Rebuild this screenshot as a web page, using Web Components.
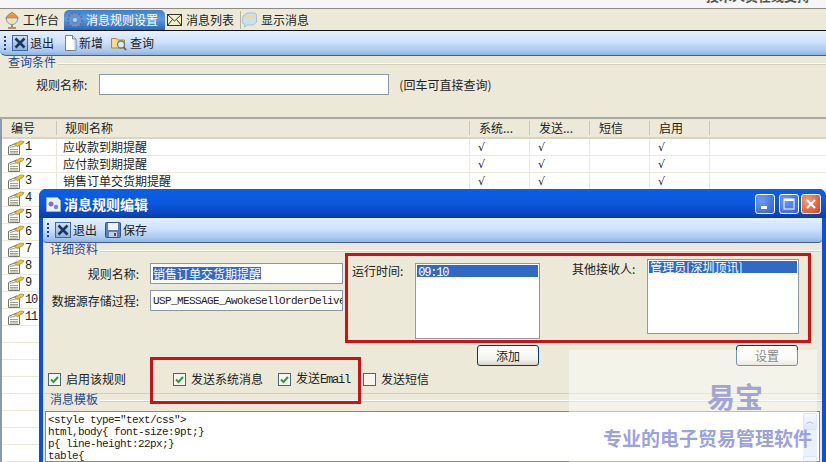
<!DOCTYPE html>
<html lang="zh">
<head>
<meta charset="utf-8">
<title>消息规则设置</title>
<style>
  html, body {
    background: #ece9d8;
    color: #222222;
    font: 12px/14px "Noto Sans CJK SC", "Liberation Sans", sans-serif;
    height: 462px;
    margin: 0;
    overflow: hidden;
    position: relative;
    width: 826px;
  }
</style>
</head>
<body>
<app-top></app-top>
<xp-tabs></xp-tabs>
<xp-toolbar>
  <xp-tool icon="exit" gap="10">退出</xp-tool>
  <xp-tool icon="page" gap="8">新增</xp-tool>
  <xp-tool icon="find">查询</xp-tool>
</xp-toolbar>
<query-panel></query-panel>
<rule-grid></rule-grid>
<rule-dialog></rule-dialog>
<note-box style="left: 345px; top: 253px; width: 466px; height: 90px;"></note-box>
<note-box style="left: 150px; top: 357px; width: 211px; height: 47px;"></note-box>
<brand-mark></brand-mark>

<script>
const ICONS = {
  exit: `<svg width="16" height="16" viewBox="0 0 16 16"><defs><linearGradient id="e" x1="0" y1="0" x2="0" y2="1"><stop offset="0" stop-color="#cfe0f4"/><stop offset="1" stop-color="#8fb0d8"/></linearGradient></defs><rect x=".5" y=".5" width="15" height="15" fill="url(#e)" stroke="#3c6aa8"/><path d="M3.5 3.5l9 9M12.5 3.5l-9 9" stroke="#17375f" stroke-width="2.6"/></svg>`,
  page: `<svg width="13" height="16" viewBox="0 0 13 16"><path d="M1.5.5h7l3.5 3.5v11.5h-10.500z" fill="#fff" stroke="#77848f"/><path d="M8.500.5v3.500h3.500" fill="#dfe6ee" stroke="#77848f"/><path d="M11 5v10" stroke="#b9c3cf"/></svg>`,
  find: `<svg width="17" height="16" viewBox="0 0 17 16"><path d="M.5 3.500h5l1 1.500h7v8h-13z" fill="#f5dc8c" stroke="#a98a3c"/><circle cx="10" cy="9.500" r="3.500" fill="#d8ecf8" stroke="#6c7c8c" stroke-width="1.300"/><path d="M12.500 12l2.500 3" stroke="#806030" stroke-width="1.800"/></svg>`,
  save: `<svg width="16" height="16" viewBox="0 0 16 16"><rect x=".5" y=".5" width="15" height="15" rx="1" fill="#5d7fc0" stroke="#33508c"/><rect x="3" y="1" width="10" height="7" fill="#eef3fa"/><rect x="4" y="10" width="8" height="5" fill="#c4cedd"/><rect x="9" y="11" width="2" height="3" fill="#33508c"/></svg>`,
  home: `<svg width="16" height="18" viewBox="0 0 16 18"><circle cx="8" cy="8" r="5.500" fill="#dce8f0" stroke="#8c9aa8"/><path d="M8 1l6.500 6h-13z" fill="#e89838" stroke="#b06a20" stroke-width=".6"/><rect x="6" y="8" width="4" height="4" fill="#f4e0a8"/><path d="M8 13.500v2.500M4 17h8" stroke="#8c7a50" stroke-width="1.500"/></svg>`,
  gear: `<svg width="16" height="16" viewBox="0 0 16 16"><circle cx="8" cy="8" r="5.500" fill="none" stroke="#6f90c4" stroke-width="3.600"/><circle cx="8" cy="8" r="7" fill="none" stroke="#4d6fa8" stroke-width="1.500" stroke-dasharray="2 1.600"/><circle cx="8" cy="8" r="2" fill="#bcd6f2"/></svg>`,
  mail: `<svg width="15" height="12" viewBox="0 0 15 12"><rect x=".5" y=".5" width="14" height="11" fill="#f6efc8" stroke="#333"/><path d="M.5.500l7 6.500 7-6.500M.5 11.500l5-6M14.500 11.500l-5-6" fill="none" stroke="#333"/></svg>`,
  bubble: `<svg width="16" height="16" viewBox="0 0 16 16"><path d="M2 4l4-3h8l1.500 2v7l-3 3h-6l-3 2 .5-2.500-3-2z" fill="#c9dff2" stroke="#a4b4c0" stroke-width=".8"/><path d="M4 3.500h9l1 2-10 1z" fill="#f3d98c"/></svg>`,
  note: `<svg width="18" height="15" viewBox="0 0 18 15"><path d="M1.500 6.500l8-3.500 3 1.500v10h-11z" fill="#f6f6f0" stroke="#77776a"/><path d="M3 7.500l7-2M3 9.500h8M3 11.500h8M3 13h8" stroke="#8d8d80" stroke-width=".8"/><path d="M7.500 4.500l6-3.500 3.500.5-1 2-5.500 3z" fill="#e8c23c" stroke="#a08420" stroke-width=".7"/></svg>`,
  app: `<svg width="15" height="16" viewBox="0 0 15 16"><path d="M.5 1.500h11l3 3v11h-14z" fill="#e8f0fa" stroke="#9ab0cc"/><circle cx="5" cy="8" r="2.500" fill="#8a70b0"/><circle cx="10" cy="11" r="2.200" fill="#6f8ec8"/></svg>`
};

class XpIcon extends HTMLElement {
  connectedCallback() {
    this.attachShadow( {mode: 'open'} );
    this.shadowRoot.innerHTML = `
      <style>
        :host { display: inline-flex; flex: none; }
        svg { display: block; }
      </style>
      ${ICONS[this.getAttribute( 'name' )]}
    `;
  }
}
customElements.define( 'xp-icon', XpIcon );

class AppTop extends HTMLElement {
  constructor() {
    super();
    this.attachShadow( {mode: 'open'} );
    this.shadowRoot.innerHTML = `
      <style>
        :host {
          background: #f6f6f8;
          border-bottom: 1px solid #8b8b82;
          box-sizing: border-box;
          display: flex;
          height: 9px;
          justify-content: flex-end;
          overflow: hidden;
          padding: 0 16px 0 0;
        }
        span { color: #555555; font-size: 13px; font-weight: 700; line-height: 14px; margin-top: -11px; }
      </style>
      <span>技术人员在线支持</span>
    `;
  }
}
customElements.define( 'app-top', AppTop );

class XpTabs extends HTMLElement {
  constructor() {
    super();
    this.attachShadow( {mode: 'open'} );
    this.shadowRoot.innerHTML = `
      <style>
        :host {
          align-items: flex-end;
          background: #ece9d8;
          border-bottom: 1px solid #111111;
          box-sizing: border-box;
          display: flex;
          height: 22px;
          padding: 0 0 0 3px;
        }
        div {
          align-items: center;
          display: flex;
          height: 20px;
          white-space: nowrap;
        }
        .one { gap: 3px; padding: 0 5px 0 1px; }
        .on {
          background: linear-gradient( #3f80c8, #5c9ce0 45%, #2a66b4 );
          border-radius: 5px 5px 0 0;
          color: #ffffff;
          gap: 3px;
          padding: 0 6px 0 3px;
          width: 92px;
        }
        .two { gap: 4px; padding: 0 6px 0 2px; }
        .three { border-left: 1px solid #b8b4a0; gap: 4px; height: 18px; margin: 0 0 1px 0; }
      </style>
      <div class="one"><xp-icon name="home"></xp-icon>工作台</div>
      <div class="on"><xp-icon name="gear"></xp-icon>消息规则设置</div>
      <div class="two"><xp-icon name="mail"></xp-icon>消息列表</div>
      <div class="three"><xp-icon name="bubble"></xp-icon>显示消息</div>
    `;
  }
}
customElements.define( 'xp-tabs', XpTabs );

class XpToolbar extends HTMLElement {
  constructor() {
    super();
    this.attachShadow( {mode: 'open'} );
    this.shadowRoot.innerHTML = `
      <style>
        :host {
          align-items: center;
          background: linear-gradient( #e4f0ff, #cfe2fb 45%, #a6c6ee 85%, #8fb2e0 );
          border-bottom: 1px solid #3d5f9e;
          border-radius: 0 0 0 6px;
          box-sizing: border-box;
          display: flex;
          height: 25px;
          padding: 0 0 0 4px;
        }
        i {
          border-left: 2px dotted #24407a;
          height: 14px;
          margin: 0 6px 0 0;
        }
      </style>
      <i></i>
      <slot></slot>
    `;
  }
}
customElements.define( 'xp-toolbar', XpToolbar );

class XpTool extends HTMLElement {
  constructor() {
    super();
    this.attachShadow( {mode: 'open'} );
  }

  connectedCallback() {
    this.shadowRoot.innerHTML = `
      <style>
        :host {
          align-items: center;
          display: inline-flex;
          gap: 2px;
          margin-right: ${this.getAttribute( 'gap' ) || 0}px;
        }
      </style>
      <xp-icon name="${this.getAttribute( 'icon' )}"></xp-icon><slot></slot>
    `;
  }
}
customElements.define( 'xp-tool', XpTool );

class XpLegend extends HTMLElement {
  constructor() {
    super();
    this.attachShadow( {mode: 'open'} );
    this.shadowRoot.innerHTML = `
      <style>
        :host {
          align-items: center;
          color: #1c4a94;
          display: flex;
          gap: 2px;
          height: 12px;
          line-height: 12px;
        }
        i { border-bottom: 1px solid #d0d0bf; border-top: 1px solid #ffffff; flex: 1; height: 0; margin-top: 3px; }
      </style>
      <slot></slot><i></i>
    `;
  }
}
customElements.define( 'xp-legend', XpLegend );

class QueryPanel extends HTMLElement {
  constructor() {
    super();
    this.attachShadow( {mode: 'open'} );
    this.shadowRoot.innerHTML = `
      <style>
        :host {
          border-bottom: 2px solid #a9a99f;
          box-sizing: border-box;
          display: block;
          height: 63px;
          padding: 0 0 0 8px;
        }
        .row {
          align-items: center;
          display: flex;
          margin: 6px 0 0 28px;
        }
        .box {
          background: #ffffff;
          border: 1px solid #8a9aa8;
          box-sizing: border-box;
          height: 21px;
          margin: 0 10px 0 12px;
          width: 290px;
        }
      </style>
      <xp-legend>查询条件</xp-legend>
      <div class="row">
        <span>规则名称:</span><span class="box"></span><span>(回车可直接查询)</span>
      </div>
    `;
  }
}
customElements.define( 'query-panel', QueryPanel );

class RuleGrid extends HTMLElement {
  constructor() {
    super();
    this.attachShadow( {mode: 'open'} );

    const names = ['应收款到期提醒', '应付款到期提醒', '销售订单交货期提醒'];
    const columns = '55px 413px 60px 60px 60px 60px 1fr';
    let rows = '';

    for( let r = 0; r < 20; r++ ) {
      const mark = r < 3 ? '√' : '';
      const head = r < 11 ? `<xp-icon name="note"></xp-icon><span class="num">${r + 1}</span>` : '';
      rows += `
        <div class="row">
          <div class="id">${head}</div>
          <div class="name">${names[r] || ''}</div>
          <div class="flag">${mark}</div>
          <div class="flag">${mark}</div>
          <div class="flag"></div>
          <div class="flag">${mark}</div>
          <div></div>
        </div>
      `;
    }

    this.shadowRoot.innerHTML = `
      <style>
        :host {
          background: #ffffff;
          border-left: 2px solid #8a9aa8;
          box-sizing: border-box;
          display: block;
          height: 344px;
          overflow: hidden;
        }
        .head, .row {
          display: grid;
          grid-template-columns: ${columns};
        }
        .head {
          background: #ece9d8;
          border-bottom: 2px solid #d8d5c4;
          box-sizing: border-box;
          height: 20px;
        }
        .head div {
          align-items: center;
          border-right: 1px solid #cbc7b8;
          display: flex;
          margin: 2px 0 2px 0;
          padding: 0 0 0 9px;
        }
        .head div:nth-child( 2 ) { padding-left: 8px; }
        .head div:last-child { border: none; }
        .row {
          border-bottom: 1px solid #ece9d8;
          box-sizing: border-box;
          height: 17px;
        }
        .row > div {
          align-items: center;
          border-right: 1px solid #ece9d8;
          display: flex;
          padding: 0 0 0 8px;
        }
        .row > div.id { gap: 0; padding: 0 0 0 5px; }
        .row > div.name { padding: 0 0 0 6px; }
        .row > div:last-child { border: none; }
        .num { font: 12px "Liberation Mono", monospace; letter-spacing: -1.2px; }
        .flag { font: 11px "DejaVu Sans", sans-serif; }
      </style>
      <div class="head">
        <div>编号</div><div>规则名称</div><div>系统...</div><div>发送...</div><div>短信</div><div>启用</div><div></div>
      </div>
      ${rows}
    `;
  }
}
customElements.define( 'rule-grid', RuleGrid );

class XpCheck extends HTMLElement {
  constructor() {
    super();
    this.attachShadow( {mode: 'open'} );
  }

  connectedCallback() {
    const mark = this.hasAttribute( 'checked' ) ? '<path d="M3 6.500l2.500 2.500 4.500-5" fill="none" stroke="#2f9a3a" stroke-width="2"/>' : '';

    this.shadowRoot.innerHTML = `
      <style>
        :host {
          align-items: center;
          display: inline-flex;
          gap: 5px;
          white-space: nowrap;
        }
        svg { display: block; flex: none; }
      </style>
      <svg width="13" height="13" viewBox="0 0 13 13">
        <rect x=".5" y=".5" width="12" height="12" fill="#f6f6f0" stroke="#4c6478"/>
        ${mark}
      </svg>
      <span><slot></slot></span>
    `;
  }
}
customElements.define( 'xp-check', XpCheck );

class XpList extends HTMLElement {
  constructor() {
    super();
    this.attachShadow( {mode: 'open'} );
    this.shadowRoot.innerHTML = `
      <style>
        :host {
          background: #ffffff;
          border: 1px solid #8a9aa8;
          box-sizing: border-box;
          display: block;
          flex: none;
          padding: 1px;
        }
        div {
          background: #316ac5;
          color: #ffffff;
          height: 12px;
          line-height: 12px;
          padding: 0 0 0 1px;
          white-space: nowrap;
        }
      </style>
      <div><slot></slot></div>
    `;
  }
}
customElements.define( 'xp-list', XpList );

class XpButton extends HTMLElement {
  constructor() {
    super();
    this.attachShadow( {mode: 'open'} );
    this.shadowRoot.innerHTML = `
      <style>
        :host {
          align-items: center;
          background: linear-gradient( #ffffff, #f4f4ee 70%, #d8d5c8 );
          border: 1px solid #003c74;
          border-radius: 3px;
          box-sizing: border-box;
          display: inline-flex;
          height: 21px;
          justify-content: center;
          width: 62px;
        }
      </style>
      <slot></slot>
    `;
  }
}
customElements.define( 'xp-button', XpButton );

class RuleDialog extends HTMLElement {
  constructor() {
    super();
    this.attachShadow( {mode: 'open'} );
    this.shadowRoot.innerHTML = `
      <style>
        :host {
          background: #0a50e0;
          border-radius: 7px 7px 0 0;
          box-sizing: border-box;
          display: flex;
          flex-direction: column;
          height: 273px;
          left: 39px;
          padding: 0 4px 0 4px;
          position: absolute;
          top: 189px;
          width: 787px;
        }
        .title {
          align-items: center;
          background: linear-gradient( #0a5fe6, #0a58dc 50%, #0a46c0 85%, #083aa4 );
          color: #ffffff;
          display: flex;
          flex: none;
          font-size: 14px;
          font-weight: 700;
          gap: 3px;
          height: 29px;
          margin: 0 -4px;
          padding: 0 5px 0 7px;
          border-radius: 7px 7px 0 0;
        }
        .title span { flex: 1; }
        .win {
          align-items: center;
          background: radial-gradient( circle at 30% 30%, #6f9cf0, #2b5fd8 );
          border: 1px solid #ffffff;
          border-radius: 3px;
          box-sizing: border-box;
          display: flex;
          flex: none;
          height: 20px;
          justify-content: center;
          margin-left: 1px;
          width: 20px;
        }
        .win.close { background: radial-gradient( circle at 30% 30%, #f0a080, #d8401c ); margin-left: -1px; }
        .body {
          background: #ece9d8;
          display: flex;
          flex: 1;
          flex-direction: column;
          min-height: 0;
        }
        xp-toolbar { border-radius: 0 0 4px 4px; }
        xp-legend { margin: 0 0 0 7px; }
        .main { display: flex; flex: none; height: 90px; }
        .fields {
          display: grid;
          gap: 6px 3px;
          grid-template-columns: 104px 193px;
          grid-template-rows: 21px 21px;
          margin: 8px 0 0 0;
          width: 302px;
        }
        .fields label { align-self: center; padding-right: 8px; text-align: right; white-space: nowrap; }
        .input {
          background: #ffffff;
          border: 1px solid #8a9aa8;
          box-sizing: border-box;
          display: flex;
          align-items: center;
          overflow: hidden;
          padding: 0 0 0 2px;
          white-space: nowrap;
        }
        .input em { background: #316ac5; color: #ffffff; font-style: normal; line-height: 13px; }
        .mono { font: 11px "Liberation Mono", monospace; letter-spacing: -.6px; }
        .time { display: flex; gap: 12px; margin: 8px 0 0 7px; width: 220px; }
        .recv { display: flex; gap: 12px; margin: 4px 0 0 0; }
        .time span, .recv span { white-space: nowrap; }
        .time > span { padding-top: 1px; }
        .recv > span { padding-top: 3px; }
        .num { font: 12px "Liberation Mono", monospace; letter-spacing: -1.2px; }
        .buttons { display: flex; flex: none; gap: 197px; height: 21px; padding: 0 0 0 434px; }
        .checks {
          align-items: center;
          display: flex;
          flex: none;
          height: 16px;
          margin: 5px 0 0 5px;
        }
        .mid { margin: 0 0 0 47px; }
        .mail { margin: 0 0 0 15px; }
        .sms { margin: 0 0 0 13px; }
        .rule { border-top: 1px solid #d0d0bf; flex: none; height: 0; margin: 6px 2px 0 2px; }
        .rule + xp-legend { margin-top: -1px; }
        .text {
          background: #ffffff;
          border: 1px solid #8a8a80;
          box-sizing: border-box;
          display: flex;
          flex: 1;
          font: 11px/12px "Liberation Mono", monospace;
          letter-spacing: -.6px;
          margin: 6px 2px 0 2px;
          min-height: 0;
          overflow: hidden;
        }
        .text pre { flex: 1; font: inherit; margin: 2px 0 0 2px; }
        .bar {
          background: #dbe6fa;
          flex: none;
          margin: 1px 2px 0 0;
          width: 14px;
        }
        .bar b {
          background: linear-gradient( #eef4fe, #c4d6f6 );
          border: 1px solid #c0d0ee;
          border-radius: 2px;
          box-sizing: border-box;
          color: #5a7ab0;
          display: block;
          font: 700 8px/15px "DejaVu Sans", sans-serif;
          height: 17px;
          text-align: center;
        }
        .bar b + b { margin-top: 26px; }
      </style>
      <div class="title">
        <xp-icon name="app"></xp-icon>
        <span>消息规则编辑</span>
        <div class="win"><svg width="10" height="10"><rect x="1" y="7" width="6" height="3" fill="#fff"/></svg></div>
        <div class="win"><svg width="12" height="12"><rect x="1" y="1" width="10" height="10" fill="none" stroke="#fff"/><rect x="1" y="1" width="10" height="2" fill="#fff"/></svg></div>
        <div class="win close"><svg width="12" height="12"><path d="M2 2l8 8M10 2l-8 8" stroke="#fff" stroke-width="2.200"/></svg></div>
      </div>
      <div class="body">
        <xp-toolbar>
          <xp-tool icon="exit" gap="8">退出</xp-tool>
          <xp-tool icon="save">保存</xp-tool>
        </xp-toolbar>
        <xp-legend>详细资料</xp-legend>
        <div class="main">
          <div class="fields">
            <label>规则名称:</label>
            <div class="input"><em>销售订单交货期提醒</em></div>
            <label>数据源存储过程:</label>
            <div class="input mono">USP_MESSAGE_AwokeSellOrderDelivery</div>
          </div>
          <div class="time">
            <span>运行时间:</span>
            <xp-list style="width: 125px; height: 76px;"><span class="num">09:10</span></xp-list>
          </div>
          <div class="recv">
            <span>其他接收人:</span>
            <xp-list style="width: 152px; height: 75px;">管理员[深圳顶讯]</xp-list>
          </div>
        </div>
        <div class="buttons">
          <xp-button>添加</xp-button>
          <xp-button>设置</xp-button>
        </div>
        <div class="checks">
          <xp-check checked>启用该规则</xp-check>
          <xp-check checked class="mid">发送系统消息</xp-check>
          <xp-check checked class="mail">发送<span class="num">Email</span></xp-check>
          <xp-check class="sms">发送短信</xp-check>
        </div>
        <div class="rule"></div>
        <xp-legend>消息模板</xp-legend>
        <div class="text">
<pre>&lt;style type="text/css"&gt;
html,body{ font-size:9pt;}
p{ line-height:22px;}
table{</pre>
          <div class="bar"><b>︿</b><b>≡</b></div>
        </div>
      </div>
    `;
  }
}
customElements.define( 'rule-dialog', RuleDialog );

// Red marks drawn over the screenshot
class NoteBox extends HTMLElement {
  constructor() {
    super();
    this.attachShadow( {mode: 'open'} );
    this.shadowRoot.innerHTML = `
      <style>
        :host {
          border: 3px solid #c81414;
          box-sizing: border-box;
          display: block;
          position: absolute;
        }
      </style>
    `;
  }
}
customElements.define( 'note-box', NoteBox );

// Watermark in the lower right corner
class BrandMark extends HTMLElement {
  constructor() {
    super();
    this.attachShadow( {mode: 'open'} );
    this.shadowRoot.innerHTML = `
      <style>
        :host {
          align-items: flex-end;
          background: rgba( 255, 255, 255, .45 );
          box-sizing: border-box;
          display: flex;
          flex-direction: column;
          height: 112px;
          left: 569px;
          padding: 29px 5px 0 0;
          position: absolute;
          top: 350px;
          width: 248px;
        }
        b { display: block; white-space: nowrap; }
        .name { color: #a2a4d2; font-size: 28px; line-height: 34px; margin: 0 49px 0 0; }
        .tag { color: #9aa2e0; font-size: 19px; line-height: 24px; margin: 13px 0 0 0; }
      </style>
      <b class="name">易宝</b>
      <b class="tag">专业的电子贸易管理软件</b>
    `;
  }
}
customElements.define( 'brand-mark', BrandMark );
</script>
</body>
</html>
